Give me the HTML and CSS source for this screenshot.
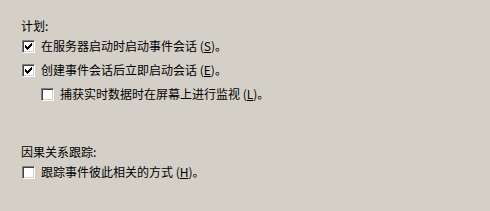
FILE: index.html
```html
<!DOCTYPE html>
<html>

<head>
    <meta charset="utf-8">
    <title>事件会话</title>
    <link rel="stylesheet" href="styles.css">
</head>

<body>
    <div class="page">
        <div class="group">
            <div class="group-title">计划:</div>
            <div class="option">
                <span class="check">
                    <svg width="7" height="7" viewBox="0 0 7 7" shape-rendering="crispEdges"><path d="M0 2h1v3H0zM1 3h1v3H1zM2 4h1v3H2zM3 3h1v3H3zM4 2h1v3H4zM5 1h1v3H5zM6 0h1v3H6z" fill="#000"/></svg>
                </span>
                <span class="text">在服务器启动时启动事件会话 (<u>S</u>)。</span>
            </div>
            <div class="option">
                <span class="check">
                    <svg width="7" height="7" viewBox="0 0 7 7" shape-rendering="crispEdges"><path d="M0 2h1v3H0zM1 3h1v3H1zM2 4h1v3H2zM3 3h1v3H3zM4 2h1v3H4zM5 1h1v3H5zM6 0h1v3H6z" fill="#000"/></svg>
                </span>
                <span class="text">创建事件会话后立即启动会话 (<u>E</u>)。</span>
            </div>
            <div class="option sub">
                <span class="check"></span>
                <span class="text">捕获实时数据时在屏幕上进行监视 (<u>L</u>)。</span>
            </div>
        </div>

        <div class="group second">
            <div class="group-title">因果关系跟踪:</div>
            <div class="option">
                <span class="check"></span>
                <span class="text">跟踪事件彼此相关的方式 (<u>H</u>)。</span>
            </div>
        </div>
    </div>
</body>

</html>
```

FILE: styles.css
```css
:root {
    --face: #d4d0c8;
    --shadow: #808080;
    --dark: #404040;
    --light: #ffffff;
}

body {
    margin: 0;
    background-color: var(--face);
    color: #000;
    font-family: "Noto Sans CJK SC", "DejaVu Sans", sans-serif;
    font-size: 12px;
}

.page {
    padding: 18px 0 0 21px;
}

.group-title {
    height: 16px;
    line-height: 16px;
}

.second {
    margin-top: 38px;
}

.option {
    display: flex;
    align-items: center;
    height: 24px;
    padding-left: 1px;
}

.option.sub {
    padding-left: 20px;
}

.check {
    box-sizing: border-box;
    width: 13px;
    height: 13px;
    margin-right: 6px;
    padding: 1px;
    background-color: var(--light);
    border: 1px solid;
    border-color: var(--shadow) var(--light) var(--light) var(--shadow);
    box-shadow: inset 1px 1px 0 var(--dark), inset -1px -1px 0 var(--face);
    display: flex;
    align-items: center;
    justify-content: center;
}

.check svg {
    display: block;
}

.text {
    line-height: 16px;
    white-space: nowrap;
}

.text u {
    text-decoration-thickness: 1px;
    text-underline-offset: 1px;
}
```
